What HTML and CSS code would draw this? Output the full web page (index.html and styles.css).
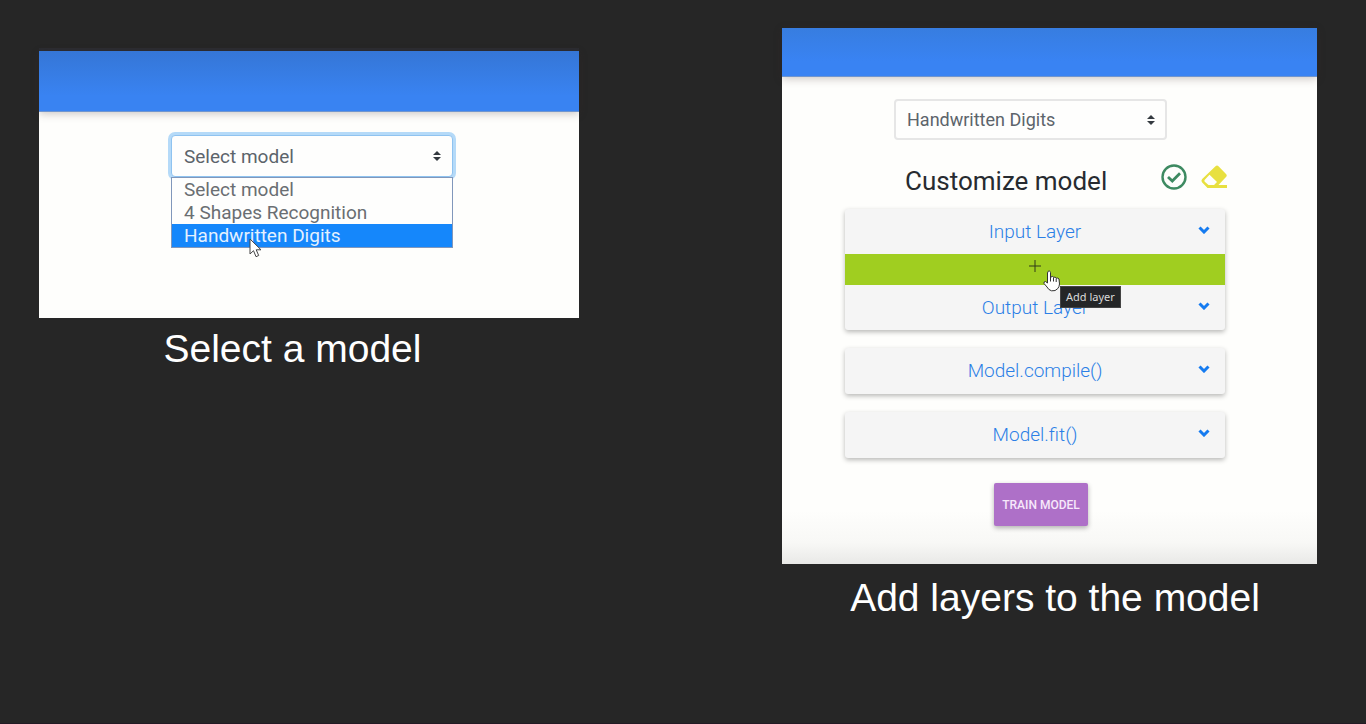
FILE: index.html
```html
<!DOCTYPE html>
<html lang="en">
<head>
<meta charset="utf-8">
<title>Model builder guide</title>
<link rel="stylesheet" href="styles.css">
</head>
<body>
<main class="guide">
  <figure class="step step-select">
    <div class="screen screen-select">
      <div class="topbar topbar-tall"></div>
      <div class="picker picker-open">
        <select class="picker-select picker-select-focus" aria-label="Model">
          <option>Select model</option>
        </select>
        <svg class="picker-arrows" viewBox="0 0 8 10" aria-hidden="true"><path d="M0 4L4 0L8 4ZM0 6L4 10L8 6Z"/></svg>
        <ul class="menu" role="listbox" aria-label="Models">
          <li class="menu-item" role="option">Select model</li>
          <li class="menu-item" role="option">4 Shapes Recognition</li>
          <li class="menu-item menu-item-active" role="option" aria-selected="true">Handwritten Digits</li>
        </ul>
        <svg class="pointer" viewBox="0 0 13 20" aria-hidden="true"><path d="M1 1V16L4.500 12.700L7 18.700L9.700 17.500L7.200 11.800H12Z"/></svg>
      </div>
    </div>
    <figcaption class="caption caption-select">Select a model</figcaption>
  </figure>

  <figure class="step">
    <div class="screen screen-build">
      <div class="topbar"></div>
      <div class="builder">
        <div class="picker picker-inset">
          <select class="picker-select" aria-label="Selected model">
            <option>Handwritten Digits</option>
          </select>
          <svg class="picker-arrows" viewBox="0 0 8 10" aria-hidden="true"><path d="M0 4L4 0L8 4ZM0 6L4 10L8 6Z"/></svg>
        </div>
        <div class="heading">
          <h2 class="heading-title">Customize model</h2>
          <div class="heading-tools">
            <button class="tool" type="button" aria-label="Validate">
              <svg class="tool-icon" viewBox="0 0 26 26"><circle cx="13" cy="13" r="11.500" fill="none" stroke="#3d8a61" stroke-width="2.400"/><path d="M7 13L11.300 17L19 9.300" fill="none" stroke="#3d8a61" stroke-width="2.800"/></svg>
            </button>
            <button class="tool" type="button" aria-label="Clear">
              <svg class="tool-icon" viewBox="0 0 26 26"><path fill="#e8e040" fill-rule="evenodd" d="M14.500 2.200Q16 0.800 17.500 2.200L25 10Q26.500 11.500 25 13L17.500 21H26V24H6.500L1.200 18.500Q-0.300 16.800 1.200 15ZM8.500 10.800L3.800 15.800Q3 16.800 3.800 17.800L7.500 21H13L16 18Z"/></svg>
            </button>
          </div>
        </div>
        <div class="card">
          <button class="layer" type="button">Input Layer<svg class="chevron" viewBox="0 0 12 8" aria-hidden="true"><path d="M1.500 1.500L6 6L10.500 1.500"/></svg></button>
          <div class="add">
            <button class="add-button" type="button" aria-label="Add layer"><svg class="plus" viewBox="0 0 12 12"><path d="M6 0V12M0 6H12"/></svg></button>
            <span class="tooltip" role="tooltip">Add layer</span>
            <svg class="hand" viewBox="0 0 18 22" aria-hidden="true"><path d="M5 1.500C6 0.500 7.500 1.200 7.500 2.500V8L8.500 6.500Q10 5.800 10.500 7.300Q12.500 6.500 13.200 8.200Q15 7.500 16 9L16.500 14Q16.200 17 14.800 18.500Q12.500 21.500 8.500 20.800Q5.500 20 4 17L1 13.500Q0.500 11.500 2.500 11.500L4.500 13V3Z"/><path d="M7.500 7V11.500M10.500 7.500V11.500M13.200 8.500V12"/></svg>
          </div>
          <button class="layer" type="button">Output Layer<svg class="chevron" viewBox="0 0 12 8" aria-hidden="true"><path d="M1.500 1.500L6 6L10.500 1.500"/></svg></button>
        </div>
        <div class="card">
          <button class="layer" type="button">Model.compile()<svg class="chevron" viewBox="0 0 12 8" aria-hidden="true"><path d="M1.500 1.500L6 6L10.500 1.500"/></svg></button>
        </div>
        <div class="card">
          <button class="layer" type="button">Model.fit()<svg class="chevron" viewBox="0 0 12 8" aria-hidden="true"><path d="M1.500 1.500L6 6L10.500 1.500"/></svg></button>
        </div>
        <button class="train" type="button">TRAIN MODEL</button>
      </div>
    </div>
    <figcaption class="caption caption-build">Add layers to the model</figcaption>
  </figure>
</main>
</body>
</html>
```

FILE: styles.css
```css
* {
  box-sizing: border-box;
}

body {
  margin: 0;
  background: #262626;
  font-family: Roboto, sans-serif;
}

.guide {
  display: grid;
  grid-template-columns: 540fr 535fr;
  column-gap: 203px;
  align-items: start;
  min-height: 100vh;
  padding: 28px 49px 0 39px;
  border-bottom: 1px solid #231a24;
}

.step {
  margin: 0;
}

.step-select {
  padding-top: 20px;
}

.screen {
  background: #fefefc;
}

.screen-select {
  padding-bottom: 70px;
  border-top: 3px solid #2b2c31;
}

.screen-build {
  padding-bottom: 38px;
  background: linear-gradient(#fefefc, #fefefc 90%, #f8f8f6 96%, #e9e9e7);
}

.topbar {
  height: 49px;
  background: linear-gradient(#377de0, #3983f3 70%);
  border-bottom: 1px solid #6f95cf;
  box-shadow: 0 2px 8px rgba(60, 40, 40, 0.25);
}

.topbar-tall {
  height: 61px;
  background: linear-gradient(#3576d6, #3983f2 75%);
}

.picker {
  position: relative;
}

.picker-open {
  margin: 23px 126px 0 132px;
}

.picker-inset {
  margin: 0 58px 0 49px;
}

.picker-select {
  display: block;
  width: 100%;
  height: 41px;
  padding: 0 11px;
  appearance: none;
  border: 2px solid #e6e6e6;
  border-radius: 4px;
  background: #fefefd;
  color: #5c646b;
  font-family: Roboto, sans-serif;
  font-size: 18px;
}

.picker-select-focus {
  height: 42px;
  padding: 0 12px;
  border: 1px solid #8fc3f0;
  box-shadow: 0 0 0 3px #b5daf8;
}

.picker-arrows {
  position: absolute;
  top: 16px;
  right: 12px;
  width: 8px;
  height: 10px;
  fill: #343a40;
}

.menu {
  position: relative;
  margin: 0;
  padding: 0;
  border: 1px solid #8197bb;
  background: #fefefd;
  list-style: none;
}

.menu-item {
  padding: 0 12px;
  color: #6a6e72;
  line-height: 23px;
}

.picker-select-focus,
.menu-item {
  font-size: 19px;
}

.menu-item-active {
  background: #1587fb;
  color: #e4f1ff;
}

.pointer {
  position: absolute;
  top: 103px;
  left: 78px;
  width: 13px;
  height: 20px;
  fill: #fff;
  stroke: #444;
  stroke-width: 1px;
}

.caption {
  padding-top: 8px;
  color: #fff;
  font-family: "Liberation Sans", Arial, sans-serif;
  font-size: 39px;
  line-height: 46px;
  text-align: center;
}

.caption-select {
  padding-right: 33px;
}

.caption-build {
  padding-top: 11px;
  padding-left: 11px;
}

.builder {
  display: flex;
  flex-direction: column;
  gap: 18px;
  padding: 22px 92px 0 63px;
}

.heading {
  display: flex;
  justify-content: space-between;
  align-items: center;
  height: 34px;
  margin: 6px 0 -7px;
  padding-left: 60px;
}

.heading-title {
  margin: 0;
  color: #272b30;
  font-size: 26px;
  font-weight: 400;
  line-height: 32px;
}

.heading-tools {
  display: flex;
  gap: 14px;
  margin-right: -2px;
  padding-bottom: 8px;
}

.tool {
  padding: 0;
  border: 0;
  background: none;
}

.tool-icon {
  display: block;
  width: 26px;
  height: 26px;
}

.card {
  border-radius: 3px;
  background: #f5f5f5;
  box-shadow: 0 2px 5px rgba(0, 0, 0, 0.28);
}

.layer {
  position: relative;
  display: block;
  width: 100%;
  height: 46px;
  padding: 0;
  border: 0;
  background: none;
  color: #2c7fe6;
  font-family: Roboto, sans-serif;
  font-size: 19px;
  font-weight: 300;
  line-height: 24px;
}

.add + .layer,
.layer:has(+ .add) {
  height: 45px;
}

.chevron {
  position: absolute;
  top: 17px;
  right: 15px;
  width: 12px;
  height: 8px;
  fill: none;
  stroke: #157bf0;
  stroke-width: 3px;
}

.add {
  position: relative;
}

.add-button {
  display: block;
  width: 100%;
  height: 31px;
  padding: 0 0 4px;
  border: 0;
  background: #a0ce20;
}

.plus {
  width: 12px;
  height: 12px;
  stroke: #303a18;
  stroke-width: 1px;
}

.tooltip {
  position: absolute;
  top: 32px;
  left: 215px;
  z-index: 1;
  padding: 0 5px;
  border: 1px solid #444;
  background: #242627;
  color: #dadada;
  font-family: "Noto Sans", sans-serif;
  font-size: 11px;
  line-height: 20px;
}

.hand {
  position: absolute;
  top: 16px;
  left: 198px;
  z-index: 2;
  width: 18px;
  height: 22px;
  fill: #fff;
  stroke: #333;
  stroke-width: 1px;
}

.train {
  align-self: center;
  width: 94px;
  height: 43px;
  margin: 7px 0 0 12px;
  padding: 0;
  border: 0;
  border-radius: 2px;
  background: #ae70c8;
  box-shadow: 0 2px 5px rgba(0, 0, 0, 0.3);
  color: #f7e8fb;
  font-family: Roboto, sans-serif;
  font-size: 12px;
  font-weight: 500;
}
```
